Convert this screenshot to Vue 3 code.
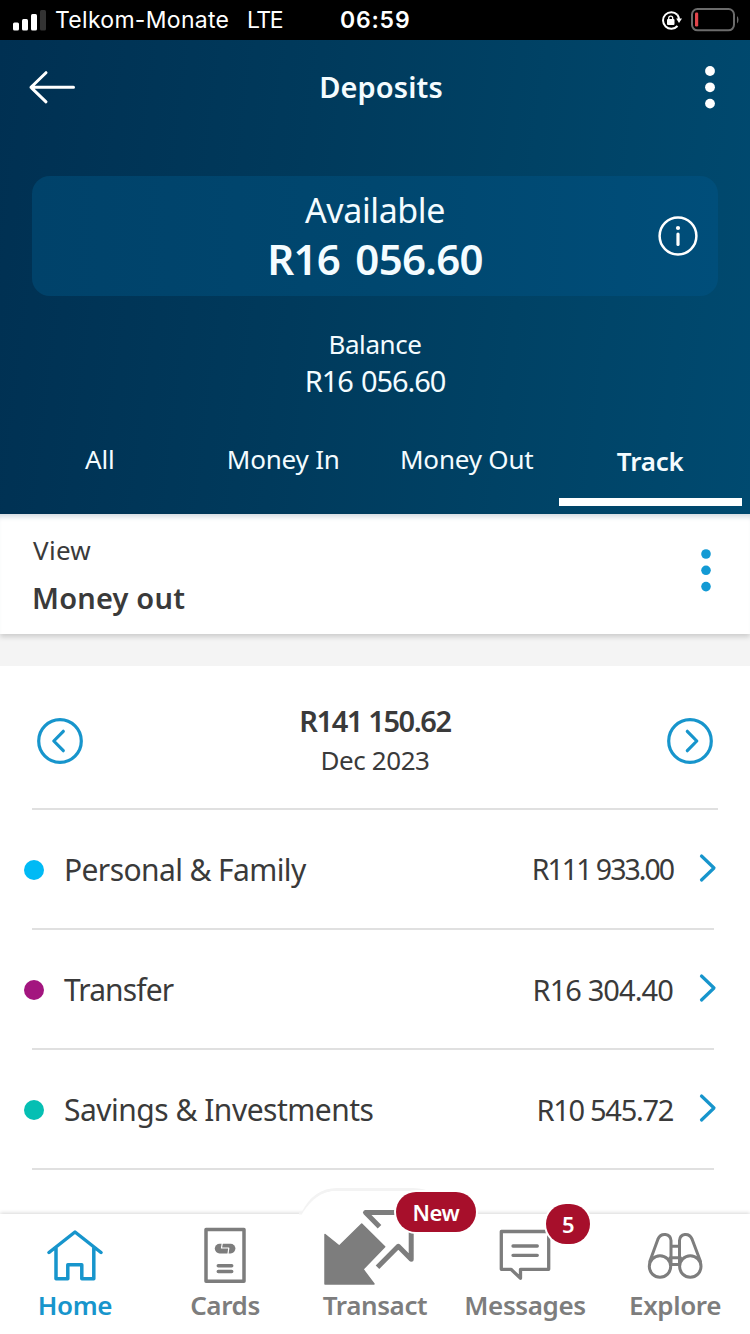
<script setup>
const tabs = [
  { name: 'All', cls: 'all' },
  { name: 'Money In', cls: 'in' },
  { name: 'Money Out', cls: 'out' },
  { name: 'Track', cls: 'active' },
]
const rows = [
  { name: 'Personal & Family', amount: 'R111 933.00', cls: 'personal' },
  { name: 'Transfer', amount: 'R16 304.40', cls: 'transfer' },
  { name: 'Savings & Investments', amount: 'R10 545.72', cls: 'savings' },
]
</script>

<template>
  <div class="screen">
    <div class="status">
      <svg class="signal" width="34" height="22" viewBox="0 0 34 22">
        <g fill="#fff">
          <rect x="0" y="13.5" width="6" height="8" rx="1.5" />
          <rect x="9" y="10" width="6" height="11.500" rx="1.5" />
          <rect x="18" y="5" width="6" height="16.500" rx="1.5" />
        </g>
        <rect x="27" y="1" width="6" height="20.500" rx="1.5" fill="#333" />
      </svg>
      <span class="carrier">Telkom-Monate</span>
      <span class="lte">LTE</span>
      <span class="time">06:59</span>
      <svg class="power" width="80" height="40" viewBox="660 0 80 40">
        <path d="M677.3 14.700A8.300 8.300 0 1 0 677.500 26" fill="none" stroke="#fff" stroke-width="2" />
        <path d="M677.300 14.700A8.300 8.300 0 0 1 679 20" fill="none" stroke="#fff" stroke-width="2" />
        <path d="M676.200 18.500h5.800l-3 4.500z" fill="#fff" />
        <rect x="667" y="19" width="7.500" height="6" rx="1" fill="#fff" />
        <path d="M668.700 19.500v-1.300a2 2 0 0 1 4 0v1.300" fill="none" stroke="#fff" stroke-width="1.300" />
        <rect x="692" y="9" width="42" height="21.300" rx="5.500" fill="none" stroke="#6b6b6b" stroke-width="2" />
        <rect x="695" y="12.500" width="3.200" height="14" rx="1.200" fill="#e0454b" />
        <path d="M737 16v7.500q1.500-1.200 1.500-3.750t-1.500-3.750z" fill="#6b6b6b" />
      </svg>
    </div>

    <header class="hero">
      <div class="bar">
        <svg width="48" height="34" viewBox="28 70 48 34">
          <path d="M73.500 87.300H31M46 72.700L31 87.300l15 14.500" fill="none" stroke="#fff" stroke-width="3" stroke-linecap="round" stroke-linejoin="round" />
        </svg>
        <h1 class="title">Deposits</h1>
        <svg width="10" height="44" viewBox="0 0 10 44" fill="#fff">
          <circle cx="5" cy="6" r="4.900" /><circle cx="5" cy="22.300" r="4.900" /><circle cx="5" cy="38.600" r="4.900" />
        </svg>
      </div>
      <div class="available">
        <div class="available-label">Available</div>
        <div class="available-sum">R16 056.60</div>
        <svg class="info" width="40" height="40" viewBox="0 0 40 40">
          <circle cx="20" cy="20" r="18.400" fill="none" stroke="#fff" stroke-width="2.500" />
          <circle cx="20" cy="12" r="2.100" fill="#fff" />
          <path d="M20 18v10.500" stroke="#fff" stroke-width="3.200" stroke-linecap="round" />
        </svg>
      </div>
      <div class="balance-label">Balance</div>
      <div class="balance-sum">R16 056.60</div>
      <nav class="tabs">
        <div v-for="t in tabs" :key="t.name" class="tab" :class="t.cls"><span>{{ t.name }}</span></div>
      </nav>
    </header>

    <section class="view">
      <div>
        <div class="view-label">View</div>
        <div class="view-value">Money out</div>
      </div>
      <svg width="10" height="44" viewBox="0 0 10 44" fill="#139ad4">
        <circle cx="5" cy="6" r="4.800" /><circle cx="5" cy="22.300" r="4.800" /><circle cx="5" cy="38.600" r="4.800" />
      </svg>
    </section>
    <div class="gap"></div>

    <main class="content">
      <div class="month">
        <svg width="46" height="46" viewBox="0 0 46 46" class="line">
          <circle cx="23" cy="23" r="21.300" /><path d="M26.300 13.300L16.800 23l9.500 9.700" />
        </svg>
        <div class="month-text">
          <div class="month-sum">R141 150.62</div>
          <div class="month-name">Dec 2023</div>
        </div>
        <svg width="46" height="46" viewBox="0 0 46 46" class="line">
          <circle cx="23" cy="23" r="21.300" /><path d="M20.300 13.300L29.800 23l-9.500 9.700" />
        </svg>
      </div>
      <div v-for="r in rows" :key="r.name" class="row" :class="r.cls">
        <i class="dot"></i>
        <span class="name">{{ r.name }}</span>
        <span class="amount">{{ r.amount }}</span>
        <svg class="line chev" width="20" height="30" viewBox="0 0 20 30"><path d="M3.500 3L16 15 3.500 27" /></svg>
      </div>
    </main>

    <footer class="nav">
      <svg class="bump" width="160" height="40" viewBox="296 1184 160 40">
        <path d="M299 1213h4C310 1199 320 1189.500 337 1189.500h76c18 0 28 9.500 34.500 23.500H452" fill="none" stroke="#f3f3f3" stroke-width="3" />
        <path d="M302 1224v-10c8-13 18-23 35-23h76c17 0 27 10 35 23v10z" fill="#fff" />
      </svg>
      <div class="item home">
        <svg width="150" height="72" viewBox="0 0 150 72">
          <path d="M49 38.500L75 18l26 20.500M56 34v30.700h11.800v-14h14v14h12V34" />
        </svg>
        <span>Home</span>
      </div>
      <div class="item cards">
        <svg width="150" height="72" viewBox="0 0 150 72">
          <path d="M56 15.500h38v51.800H56zM68.300 51.700h13.400M68.300 57.600h13.400" />
          <rect x="64.800" y="29.800" width="20.600" height="9.600" rx="4.800" fill="#7d7d7d" stroke="none" />
          <path d="M72.300 29l-.8 5h7.300l-.8 6" stroke="#fff" stroke-width="1.200" />
        </svg>
        <span>Cards</span>
      </div>
      <div class="item transact">
        <svg width="150" height="72" viewBox="0 0 150 72">
          <path d="M25 20.500L39.300 32 61.700 10l23 22.700L63 55.300l11 14.700H25z" fill="#7d7d7d" stroke-width="1.500" />
          <path d="M79.500 12.800L65.500-1.500H99M111.200 16v29.200L98.300 32.300 77.500 53.300" stroke-width="5" stroke-linecap="butt" />
        </svg>
        <span>Transact</span>
        <b class="badge new">New</b>
      </div>
      <div class="item messages">
        <svg width="150" height="72" viewBox="0 0 150 72">
          <path d="M51.300 17.500h47.400v37.800H70.500v9l-9.500-9h-9.700zM63 32h24.300M63 41.300h24.300" stroke-width="3.300" />
        </svg>
        <span>Messages</span>
        <b class="badge five">5</b>
      </div>
      <div class="item explore">
        <svg width="150" height="72" viewBox="0 0 150 72">
          <g stroke-width="3">
            <circle cx="60" cy="52.500" r="10.700" /><circle cx="90.300" cy="52.500" r="10.700" />
            <path d="M49.800 47.500L58 25c3.200-6.800 12.500-5.500 13 1.500V49M100.500 47.500L92 25c-3.200-6.800-12-5.500-12.500 1.500V49M71 32.200h8.500M70 43.800h10.500M71 50.500h8.500" />
          </g>
        </svg>
        <span>Explore</span>
      </div>
    </footer>
  </div>
</template>

<style>
html, body { margin: 0; background: #fff; }
</style>

<style scoped>
.screen { width: 750px; height: 1334px; overflow: hidden; display: flex; flex-direction: column; background: #fff; color: #3a3a3a; font-family: "Noto Sans", sans-serif; white-space: nowrap; }
svg { display: block; overflow: visible; flex: none; }

.status { position: relative; height: 40px; flex: none; display: flex; align-items: center; background: #000; color: #fff; font-family: Inter, sans-serif; font-size: 23px; line-height: 42px; }
.signal { margin: -1px 8px 0 13px; }
.carrier { width: 192px; letter-spacing: 0.3px; }
.lte { width: 93px; letter-spacing: -1.5px; }
.time { font-weight: 600; letter-spacing: 0.8px; }
.power { margin-left: auto; margin-right: 10px; }

.hero { height: 474px; flex: none; color: #f4fcff; background: linear-gradient(97deg, #003052 0%, #003a5c 40%, #004265 68%, #004a70 100%); text-align: center; display: flex; flex-direction: column; }
.bar { height: 94px; padding: 0 35px 0 28px; display: flex; align-items: center; justify-content: space-between; }
.title { margin: -2px 19px 0 0; font-size: 29px; font-weight: 600; letter-spacing: 0.1px; }
.available { position: relative; height: 120px; margin: 42px 32px 0; border-radius: 18px; background: linear-gradient(90deg, #00426a, #00476f 50%, #004e7a); }
.available-label { padding-top: 11px; font-size: 34px; line-height: 46px; letter-spacing: -0.4px; }
.available-sum { font-size: 42px; line-height: 52px; font-weight: 600; letter-spacing: -0.7px; word-spacing: 5px; }
.info { position: absolute; right: 20px; top: 40px; }
.balance-label { margin-top: 30px; font-size: 26px; line-height: 36px; letter-spacing: -0.4px; }
.balance-sum { font-size: 29px; line-height: 38px; letter-spacing: -1.1px; word-spacing: 2px; }
.tabs { margin: auto 8px 8px; height: 90px; display: flex; }
.tab { flex: 1; padding-top: 23px; font-size: 26px; line-height: 40px; box-sizing: border-box; border-bottom: 8px solid transparent; letter-spacing: -0.2px; }
.tab.active { padding-top: 25px; font-weight: 600; border-color: #fff; }

.view { position: relative; z-index: 1; height: 120px; flex: none; box-sizing: border-box; padding: 0 39px 8px 33px; display: flex; align-items: center; justify-content: space-between; background: #fff; box-shadow: inset 0 6px 5px -3px #d5dce2, 0 3px 5px rgba(0, 0, 0, 0.16); }
.view-label { font-size: 26px; line-height: 38px; margin-top: 9px; letter-spacing: 0.3px; }
.view-value { font-size: 29px; line-height: 40px; font-weight: 600; margin: 9px 0 0 -1px; letter-spacing: 0.2px; }
.gap { height: 32px; flex: none; background: #f4f4f4; }

.content { flex: 1; min-height: 0; overflow: hidden; }
.month { height: 144px; margin: 0 32px; padding: 0 5px; box-sizing: border-box; border-bottom: 2px solid #e0e0e0; display: flex; align-items: center; justify-content: space-between; }
.month > svg { margin-top: 8px; }
.month-text { text-align: center; margin-top: 6px; }
.month-sum { font-size: 29px; font-weight: 600; line-height: 40px; letter-spacing: -1.4px; }
.month-name { font-size: 26px; line-height: 38px; letter-spacing: -0.4px; }
.line { fill: none; stroke: #1795cc; stroke-width: 3.2; stroke-linecap: round; stroke-linejoin: round; }
.row { height: 120px; margin: 0 36px 0 32px; box-sizing: border-box; border-bottom: 2px solid #e0e0e0; display: flex; align-items: center; font-size: 30px; }
.dot { width: 20px; height: 20px; border-radius: 50%; margin: 2px 0 0 -8px; background: #00baf5; }
.transfer .dot { background: #a3157f; }
.savings .dot { background: #05bfb3; }
.name { margin-left: 20px; letter-spacing: -0.6px; }
.transfer .name { letter-spacing: -0.9px; }
.savings .name { letter-spacing: -0.5px; }
.amount { margin-left: auto; font-size: 29px; letter-spacing: -0.9px; }
.personal .amount { font-size: 28.5px; letter-spacing: -2px; }
.savings .amount { letter-spacing: -1.3px; }
.chev { margin: -2px -4px 0 25px; }

.nav { position: relative; height: 120px; flex: none; display: flex; background: #fff; box-shadow: 0 -1px 4px rgba(0, 0, 0, 0.16); }
.bump { position: absolute; left: 296px; top: -30px; }
.item { position: relative; width: 150px; text-align: center; color: #7d7d7d; font-size: 26px; font-weight: 600; line-height: 38px; letter-spacing: -0.4px; }
.item svg { fill: none; stroke: currentColor; stroke-width: 3.5; stroke-linecap: round; stroke-linejoin: round; }
.item.home { color: #1795cc; }
.badge { position: absolute; height: 40px; border-radius: 20px; background: #a70f2b; color: #fff; font-size: 22px; font-weight: 600; line-height: 40px; box-shadow: 0 0 0 2px #fff; }
.new { left: 96px; top: -22px; width: 80px; z-index: 2; }
.five { left: 96px; top: -10px; width: 44px; }
</style>
